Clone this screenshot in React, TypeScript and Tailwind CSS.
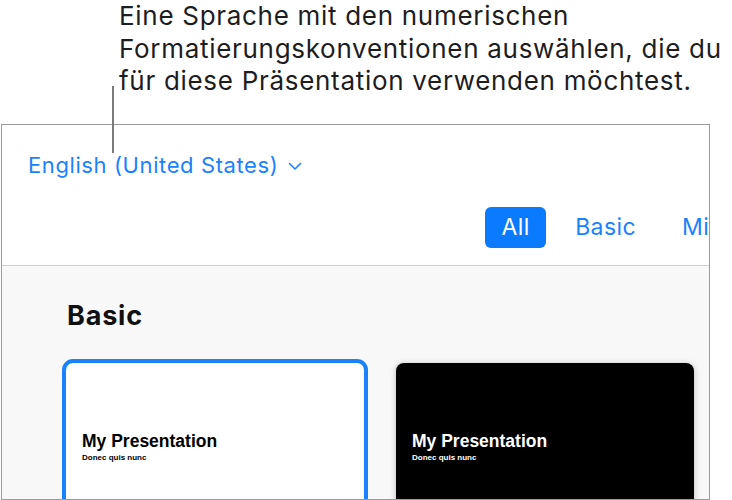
import React from "react";

export default function App() {
  return (
    <div className="relative w-[732px] h-[500px] overflow-hidden bg-white" style={{ fontFamily: "Inter, Roboto, sans-serif" }}>
      {/* callout text */}
      <div className="pl-[119px] pt-0 h-[124px] text-[26px] leading-[32.5px] tracking-[0.7px] text-[#1d1d1f]">
        <div>Eine Sprache mit den numerischen</div>
        <div>Formatierungskonventionen auswählen, die du</div>
        <div>für diese Präsentation verwenden möchtest.</div>
      </div>
      {/* callout leader line */}
      <div className="absolute left-[112px] top-[86px] w-[2px] h-[67px] bg-[#7a7a7a]" />

      {/* frame */}
      <div className="ml-px w-[709px] h-[376px] border border-[#9b9b9b] flex flex-col overflow-hidden">
        <div className="h-[141px] shrink-0 border-b border-[#cfcfcf] bg-white flex flex-col">
          <div className="flex items-center pl-[26px] pt-[25px] text-[#1a82fb] text-[22px] leading-[30px] tracking-[0.6px]">
            <span>English (United States)</span>
            <svg className="ml-[10px] mt-[2px]" width="14" height="9" viewBox="0 0 14 9" fill="none">
              <path d="M1.5 1.5 L7 7 L12.5 1.5" stroke="#1a82fb" strokeWidth="1.6" strokeLinecap="round" strokeLinejoin="round" />
            </svg>
          </div>
          <div className="flex justify-end items-center mt-[27px] text-[23px] tracking-[0.4px] whitespace-nowrap">
            <div className="w-[61px] h-[41px] rounded-[6px] bg-[#0a7aff] text-white flex items-center justify-center">All</div>
            <div className="ml-[29px] text-[#1a82fb]">Basic</div>
            <div className="ml-[46px] w-[27px] overflow-hidden text-[#1a82fb]">Mi</div>
          </div>
        </div>
        <div className="flex-1 bg-[#f8f8f9] pl-[60px] pt-[35px]">
          <div className="pl-[5px] text-[27px] font-bold leading-[30px] tracking-[0.8px] text-[#111]">Basic</div>
          <div className="flex items-start mt-[28px] gap-[28px]" style={{ fontFamily: "'Liberation Sans', Arial, sans-serif" }}>
            <div className="w-[306px] h-[200px] shrink-0 rounded-[11px] border-[4px] border-[#1a82fb] bg-white pl-[16px] pt-[68px]">
              <div className="text-[17.5px] font-bold leading-[20px] text-black">My Presentation</div>
              <div className="text-[8px] font-bold leading-[12px] mt-[1px] text-black">Donec quis nunc</div>
            </div>
            <div className="w-[298px] h-[200px] shrink-0 mt-[4px] rounded-[8px] bg-black pl-[16px] pt-[68px] shadow-[0_1px_6px_rgba(0,0,0,0.25)]">
              <div className="text-[17.5px] font-bold leading-[20px] text-white">My Presentation</div>
              <div className="text-[8px] font-bold leading-[12px] mt-[1px] text-white">Donec quis nunc</div>
            </div>
          </div>
        </div>
      </div>
    </div>
  );
}
